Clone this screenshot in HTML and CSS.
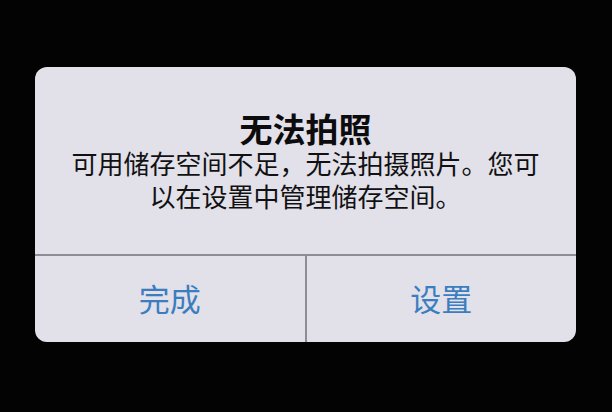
FILE: index.html
```html
<!DOCTYPE html>
<html lang="zh-CN">
<head>
    <meta charset="UTF-8">
    <meta name="viewport" content="width=device-width, initial-scale=1.0">
    <title>无法拍照</title>
    <link rel="stylesheet" href="styles.css">
</head>
<body>
    <div class="alert">
        <div class="alert-body">
            <h1 class="alert-title">无法拍照</h1>
            <p class="alert-message">可用储存空间不足，无法拍摄照片。您可以在设置中管理储存空间。</p>
        </div>
        <div class="alert-actions">
            <button class="alert-button">完成</button>
            <button class="alert-button">设置</button>
        </div>
    </div>
</body>
</html>
```

FILE: styles.css
```css
body {
    margin: 0;
    padding: 0;
    background-color: #030304;
    font-family: "Noto Sans CJK SC", "Noto Sans", sans-serif;
    width: 612px;
    height: 412px;
    overflow: hidden;
}
.alert {
    margin: 67px 0 0 35px;
    width: 541px;
    height: 275px;
    background-color: #e2e0e9;
    border-radius: 12px;
    display: flex;
    flex-direction: column;
    overflow: hidden;
}
.alert-body {
    height: 189px;
    box-sizing: border-box;
    padding: 44px 30px 0;
    text-align: center;
    border-bottom: 2px solid #8e8d94;
}
.alert-title {
    margin: 0;
    font-size: 33px;
    line-height: 34px;
    font-weight: bold;
    color: #0c0c0e;
}
.alert-message {
    margin: 1px 0 0;
    font-size: 26px;
    line-height: 33px;
    color: #111113;
}
.alert-actions {
    flex: 1;
    display: flex;
}
.alert-button {
    flex: 1;
    border: none;
    background: none;
    padding: 0 0 4px;
    font-family: inherit;
    font-size: 31px;
    color: #3b7ec0;
    cursor: pointer;
}
.alert-button + .alert-button {
    border-left: 2px solid #8e8d94;
}
```
